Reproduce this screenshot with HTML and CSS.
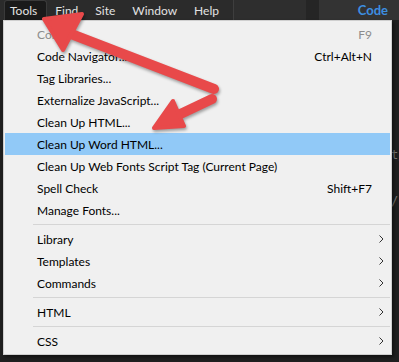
FILE: index.html
```html
<!DOCTYPE html>
<html lang="en">

<head>
    <meta charset="UTF-8">
    <meta name="viewport" content="width=device-width, initial-scale=1.0">
    <title>Tools Menu</title>
    <link rel="stylesheet" href="styles.css">
</head>

<body>

    <div class="app">

        <!-- Menu bar -->
        <div class="menubar">
            <div class="menus">
                <span class="menu active">Tools</span>
                <span class="menu">Find</span>
                <span class="menu">Site</span>
                <span class="menu">Window</span>
                <span class="menu">Help</span>
            </div>
            <div class="bar-panel"></div>
            <div class="bar-gap"></div>
            <div class="bar-view">Code</div>
        </div>

        <!-- Code editor behind the menu -->
        <div class="editor">
            <div class="line"><span class="tag">&lt;meta</span> <span class="att">charset</span><span class="val">="utf-8"</span><span class="tag">&gt;</span></div>
            <div class="line"><span class="tag">&lt;title&gt;</span><span class="txt">Pool Service and Repair</span><span class="tag">&lt;/title&gt;</span></div>
            <div class="line"><span class="tag">&lt;link</span> <span class="att">href</span><span class="val">="css/style.css"</span> <span class="att">rel</span><span class="val">="stylesheet"</span> <span class="dim">type="text/css"</span></div>
            <div class="line"><span class="tag">&lt;link</span> <span class="att">href</span><span class="val">="css/menu.css"</span> <span class="att">rel</span><span class="val">="stylesheet"</span> <span class="dim">type="text/css"</span></div>
            <div class="line"></div>
            <div class="line"><span class="tag">&lt;script</span> <span class="att">src</span><span class="val">="js/jquery.min.js"</span><span class="tag">&gt;&lt;/script&gt;</span></div>
            <div class="line"><span class="tag">&lt;script</span> <span class="att">src</span><span class="val">="js/menu.js"</span><span class="tag">&gt;&lt;/script&gt;</span></div>
            <div class="line flush"><span class="val">""</span><span class="tag">&gt;</span></div>
            <div class="line flush"><span class="att">m</span></div>
            <div class="line"><span class="tag">&lt;meta</span> <span class="att">name</span><span class="val">="author"</span> <span class="att">content</span><span class="val">="Blue Water Pools, Inc. =</span></div>
            <div class="line flush"><span class="tag">&lt;</span> <span class="att">name</span><span class="val">="robots"</span> <span class="att">content</span><span class="val">="index, follow, archive, r</span></div>
            <div class="line flush"><span class="tag">&lt;</span> <span class="dim">name="revisit" content="7 days", s</span></div>
            <div class="line flush"><span class="tag">&lt;</span></div>
            <div class="line"></div>
            <div class="line"><span class="tag">&lt;meta</span> <span class="att">name</span><span class="val">="viewport"</span> <span class="att">content</span><span class="val">="width=device-width, a</span></div>
            <div class="line"></div>
            <div class="line"><span class="tag">&lt;meta</span> <span class="att">name</span><span class="val">="description"</span> <span class="att">content</span><span class="val">="We service po</span></div>
            <div class="line"></div>
            <div class="line"><span class="att">name</span><span class="val">="keywords"</span> <span class="att">content</span><span class="val">="pools, pool, maintenance, service</span></div>
        </div>

        <!-- Tools dropdown -->
        <div class="dropdown">
            <div class="item disabled"><span class="label">Compile</span><span class="key">F9</span><span class="sub"></span></div>
            <div class="item"><span class="label">Code Navigator...</span><span class="key">Ctrl+Alt+N</span><span class="sub"></span></div>
            <div class="item"><span class="label">Tag Libraries...</span><span class="key"></span><span class="sub"></span></div>
            <div class="item"><span class="label">Externalize JavaScript...</span><span class="key"></span><span class="sub"></span></div>
            <div class="item"><span class="label">Clean Up HTML...</span><span class="key"></span><span class="sub"></span></div>
            <div class="item selected"><span class="label">Clean Up Word HTML...</span><span class="key"></span><span class="sub"></span></div>
            <div class="item"><span class="label">Clean Up Web Fonts Script Tag (Current Page)</span><span class="key"></span><span class="sub"></span></div>
            <div class="item"><span class="label">Spell Check</span><span class="key">Shift+F7</span><span class="sub"></span></div>
            <div class="item"><span class="label">Manage Fonts...</span><span class="key"></span><span class="sub"></span></div>
            <div class="separator"></div>
            <div class="item"><span class="label">Library</span><span class="key"></span><span class="sub"><svg width="5" height="8" viewBox="0 0 5 8"><polyline points="0.5,0.5 4,4 0.5,7.5" /></svg></span></div>
            <div class="item"><span class="label">Templates</span><span class="key"></span><span class="sub"><svg width="5" height="8" viewBox="0 0 5 8"><polyline points="0.5,0.5 4,4 0.5,7.5" /></svg></span></div>
            <div class="item"><span class="label">Commands</span><span class="key"></span><span class="sub"><svg width="5" height="8" viewBox="0 0 5 8"><polyline points="0.5,0.5 4,4 0.5,7.5" /></svg></span></div>
            <div class="separator"></div>
            <div class="item"><span class="label">HTML</span><span class="key"></span><span class="sub"><svg width="5" height="8" viewBox="0 0 5 8"><polyline points="0.5,0.5 4,4 0.5,7.5" /></svg></span></div>
            <div class="separator"></div>
            <div class="item"><span class="label">CSS</span><span class="key"></span><span class="sub"><svg width="5" height="8" viewBox="0 0 5 8"><polyline points="0.5,0.5 4,4 0.5,7.5" /></svg></span></div>
        </div>

        <!-- Red callout arrows -->
        <svg class="arrows" width="399" height="362" viewBox="0 0 399 362">
            <g fill="#e8494a" stroke="#e8494a" stroke-linecap="round" stroke-linejoin="round">
                <line x1="66" y1="32" x2="214" y2="89" stroke-width="10" />
                <polygon points="44,19 82,14 63,50" stroke-width="4" />
                <line x1="212" y1="99" x2="172" y2="118" stroke-width="10" />
                <polygon points="154,128 173,101 184,126" stroke-width="4" />
            </g>
        </svg>

    </div>

</body>

</html>
```

FILE: styles.css
```css
body {
    margin: 0;
    padding: 0;
    background-color: #1e1e1e;
    font-family: "Lato", "Segoe UI", sans-serif;
}

.app {
    position: relative;
    width: 399px;
    height: 362px;
    overflow: hidden;
    background-color: #1f1f1f;
}

/* menu bar */

.menubar {
    display: flex;
    height: 20px;
    background-color: #2b2b2b;
}

.menus {
    display: flex;
    align-items: stretch;
    width: 233px;
    padding-left: 4px;
    box-sizing: border-box;
}

.menu {
    display: flex;
    align-items: center;
    padding: 0 8.5px;
    color: #e2e2e2;
    font-size: 12px;
}

.menu.active {
    padding-left: 5px;
    background-color: #1a1a1a;
    border: 1px solid #3a3a3a;
    border-bottom: none;
    border-radius: 3px 3px 0 0;
}

.bar-panel {
    width: 72px;
    background-color: #2e2e2e;
    border-left: 1px solid #3e3e3e;
}

.bar-gap {
    width: 13px;
    background-color: #252525;
}

.bar-view {
    flex: 1;
    display: flex;
    align-items: center;
    justify-content: flex-end;
    padding-right: 11px;
    background-color: #333333;
    color: #3d8ee0;
    font-size: 13px;
    font-weight: bold;
}

/* editor */

.editor {
    padding: 6px 0 0 8px;
    font-family: "DejaVu Sans Mono", monospace;
    font-size: 12px;
    white-space: pre;
}

.line {
    height: 18px;
    line-height: 18px;
}

.line.flush {
    margin-left: -8px;
}

.tag {
    color: #6c8fd6;
}

.att {
    color: #7fa63a;
}

.val {
    color: #e0a238;
}

.txt {
    color: #d0d0d0;
}

.dim {
    color: #7a7a7a;
}

/* dropdown */

.dropdown {
    position: absolute;
    top: 20px;
    left: 3px;
    width: 389px;
    box-sizing: border-box;
    padding: 2px 1px;
    background-color: #f0f0f0;
    border: 1px solid #cfcfcf;
    box-shadow: 2px 2px 3px rgba(0, 0, 0, 0.45);
}

.item {
    display: flex;
    align-items: center;
    height: 22px;
    padding-left: 32px;
    color: #000;
    font-size: 12px;
}

.item .label {
    flex: 1;
}

.item .key {
    text-align: right;
}

.item .sub {
    width: 18px;
    display: flex;
    justify-content: center;
}

.item .sub svg {
    fill: none;
    stroke: #333;
    stroke-width: 1;
}

.item.disabled {
    color: #8d8d8d;
}

.item.selected {
    background-color: #91c9f7;
}

.separator {
    height: 7px;
    margin-left: 28px;
    display: flex;
    align-items: center;
}

.separator::after {
    content: "";
    flex: 1;
    height: 1px;
    background-color: #d5d5d5;
}

/* arrows */

.arrows {
    position: absolute;
    top: 0;
    left: 0;
    filter: drop-shadow(1px 2px 1.5px rgba(0, 0, 0, 0.35));
}
```
